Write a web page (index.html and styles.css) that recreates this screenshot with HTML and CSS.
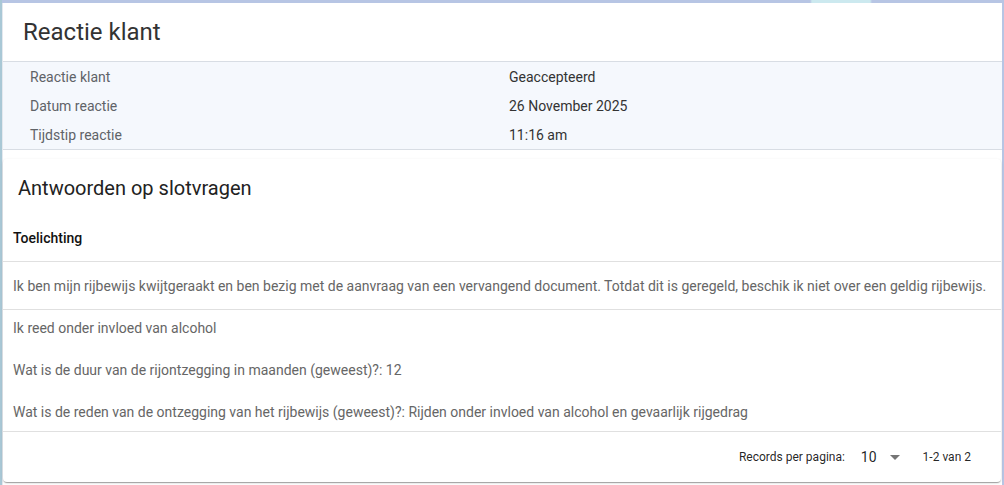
FILE: index.html
```html
<!DOCTYPE html>
<html lang="nl">
<head>
<meta charset="utf-8">
<title>Reactie klant</title>
<link rel="stylesheet" href="styles.css">
</head>
<body>
<div class="page">
  <section class="summary">
    <h1 class="summary-title">Reactie klant</h1>
    <div class="info">
      <div class="info-row"><span class="label">Reactie klant</span><span class="value">Geaccepteerd</span></div>
      <div class="info-row"><span class="label">Datum reactie</span><span class="value">26 November 2025</span></div>
      <div class="info-row"><span class="label">Tijdstip reactie</span><span class="value">11:16 am</span></div>
    </div>
  </section>

  <section class="card">
    <h2 class="card-title">Antwoorden op slotvragen</h2>
    <div class="table">
      <div class="row head">Toelichting</div>
      <div class="row cell">Ik ben mijn rijbewijs kwijtgeraakt en ben bezig met de aanvraag van een vervangend document. Totdat dit is geregeld, beschik ik niet over een geldig rijbewijs.</div>
      <div class="row multi">
        <p>Ik reed onder invloed van alcohol</p>
        <p>Wat is de duur van de rijontzegging in maanden (geweest)?: 12</p>
        <p>Wat is de reden van de ontzegging van het rijbewijs (geweest)?: Rijden onder invloed van alcohol en gevaarlijk rijgedrag</p>
      </div>
    </div>
    <div class="paginator">
      <span class="pg-label">Records per pagina:</span>
      <span class="pg-select"><span class="pg-value">10</span><span class="pg-arrow"></span></span>
      <span class="pg-range">1-2 van 2</span>
    </div>
  </section>
</div>
</body>
</html>
```
FILE: styles.css
```css
* { box-sizing: border-box; }
html, body { height: 100%; }
body {
  margin: 0;
  font-family: Roboto, "Liberation Sans", sans-serif;
  background: linear-gradient(90deg, #a9c8d6 0, #a9c8d6 2px, #b7c5e4 2px, #b7c5e4 810px, #cce9ef 812px, #cce9ef 870px, #b7c5e4 872px);
  overflow: hidden;
}
.page {
  margin: 3px 2px 0 2px;
  background: #fff;
  min-height: 482px;
  border-left: 1px solid #e4e8ee;
}
.summary-title {
  margin: 0;
  height: 59px;
  display: flex;
  align-items: center;
  padding-left: 20px;
  font-size: 24px;
  font-weight: 400;
  color: #333;
  border-bottom: 1px solid #d8dde4;
}
.info {
  background: #f5f8fd;
  border-bottom: 1px solid #d8dde4;
}
.info-row {
  display: grid;
  grid-template-columns: 479px 1fr;
  height: 29px;
  align-items: center;
  padding-left: 27px;
  font-size: 14px;
}
.label { color: #5f6368; }
.value { color: #333; }

.card {
  margin: 9px 1px 0 0;
  background: #fff;
  border-radius: 4px;
  box-shadow: 0 2px 1px -1px rgba(0,0,0,.2), 0 1px 1px 0 rgba(0,0,0,.14), 0 1px 3px 0 rgba(0,0,0,.12);
}
.card-title {
  margin: 0;
  height: 55px;
  padding: 2px 0 0 15px;
  display: flex;
  align-items: center;
  font-size: 20px;
  font-weight: 400;
  color: #222;
}
.row {
  border-bottom: 1px solid #e0e0e0;
  padding-left: 10px;
  font-size: 14px;
  color: #666;
}
.head {
  height: 48px;
  display: flex;
  align-items: center;
  font-size: 14px;
  font-weight: 500;
  color: #111;
}
.cell {
  height: 48px;
  display: flex;
  align-items: center;
}
.multi {
  padding-top: 8px;
  padding-bottom: 8px;
}
.multi p {
  margin: 0 0 21px;
  line-height: 21px;
}
.multi p:last-child { margin-bottom: 0; }

.paginator {
  height: 50px;
  display: flex;
  justify-content: flex-end;
  align-items: center;
  padding-right: 30px;
  font-size: 12px;
  color: rgba(0,0,0,.87);
}
.pg-select {
  display: flex;
  align-items: center;
  margin-left: 16px;
}
.pg-value { font-size: 14px; }
.pg-arrow {
  margin-left: 13px;
  width: 0;
  height: 0;
  border-left: 5px solid transparent;
  border-right: 5px solid transparent;
  border-top: 5px solid #757575;
}
.pg-range { margin-left: 23px; }
```
